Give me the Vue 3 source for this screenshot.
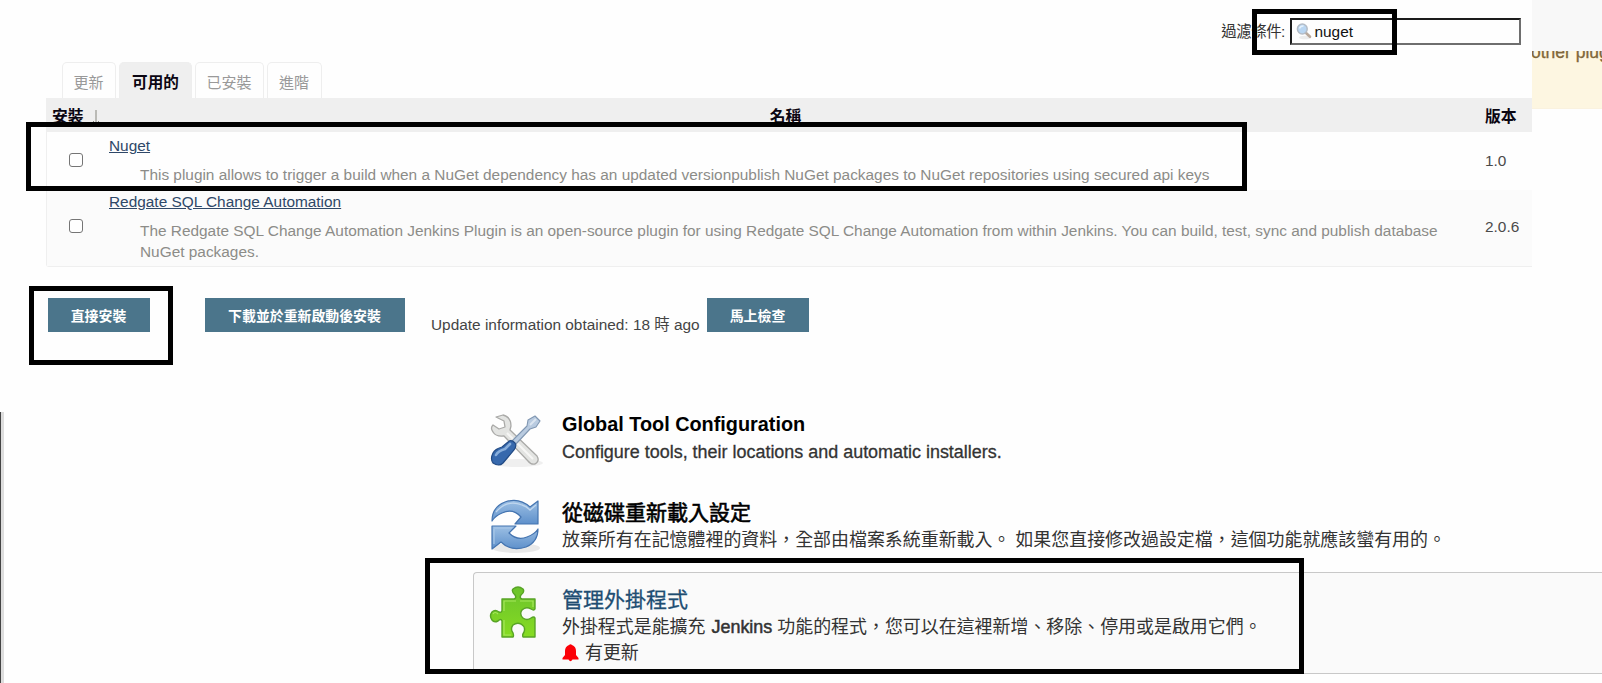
<script setup>
const tabs = [
  { label: '更新', width: 54 },
  { label: '可用的', width: 73, active: true },
  { label: '已安裝', width: 69 },
  { label: '進階', width: 55 },
]
const plugins = [
  {
    name: 'Nuget',
    lines: ['This plugin allows to trigger a build when a NuGet dependency has an updated versionpublish NuGet packages to NuGet repositories using secured api keys'],
    version: '1.0',
  },
  {
    name: 'Redgate SQL Change Automation',
    lines: [
      'The Redgate SQL Change Automation Jenkins Plugin is an open-source plugin for using Redgate SQL Change Automation from within Jenkins. You can build, test, sync and publish database',
      'NuGet packages.',
    ],
    version: '2.0.6',
  },
]
</script>

<template>
  <div class="page">
    <div class="upper">
      <main class="manager">
        <div class="filter">
          <label>過濾條件:</label>
          <div class="search">
            <svg width="17" height="17" viewBox="0 0 17 17">
              <ellipse cx="9" cy="14.5" rx="6" ry="1.8" fill="#ececec" />
              <path d="M9.5 9.5L14 13.8" stroke="#b9a99c" stroke-width="2.6" stroke-linecap="round" />
              <circle cx="6.3" cy="6" r="4.9" fill="#b9d6f2" stroke="#b4bcc6" stroke-width="1.5" />
              <path d="M3.5 5.5Q4.5 2.8 7.5 3" stroke="#e6f2fc" stroke-width="1.5" fill="none" />
            </svg>
            <span>nuget</span>
          </div>
        </div>
        <nav class="tabs">
          <div v-for="t in tabs" :key="t.label" class="tab" :class="{ active: t.active }" :style="{ width: t.width + 'px' }">{{ t.label }}</div>
        </nav>
        <div class="table">
          <div class="row head">
            <div class="c1">安裝<svg class="arrow" width="8" height="15" viewBox="0 0 8 15"><path d="M4 0V14M1 11L4 14L7 11" stroke="#85857c" fill="none" /></svg></div>
            <div class="c2">名稱</div>
            <div class="c3">版本</div>
          </div>
          <div v-for="p in plugins" :key="p.name" class="row item">
            <div class="c1"><i class="check"></i></div>
            <div class="c2">
              <a>{{ p.name }}</a>
              <div class="desc"><p v-for="l in p.lines" :key="l">{{ l }}</p></div>
            </div>
            <div class="c3">{{ p.version }}</div>
          </div>
        </div>
        <div class="actions">
          <button class="b1">直接安裝</button>
          <button class="b2">下載並於重新啟動後安裝</button>
          <span class="info">Update information obtained: 18 時 ago</span>
          <button class="b3">馬上檢查</button>
        </div>
      </main>
      <aside class="side">
        <div class="side-top"></div>
        <div class="notice"><span>other plug</span></div>
      </aside>
    </div>

    <section class="lower">
      <div class="entry tool">
        <svg class="icon" width="56" height="56" viewBox="0 0 56 56">
          <ellipse cx="29" cy="50" rx="26" ry="4" fill="#efefef" />
          <path d="M8 4L15 2Q23 4 23 13L22 17L49 43Q52 48 47 51Q43 52 40 48L16 23Q8 24 5 19Q2 15 5 12L11 16L17 14L16 8Z" fill="#e3e4e2" stroke="#aaaaa8" stroke-width="1.3" stroke-linejoin="round" />
          <path d="M19 20L45 46" stroke="#f6f6f5" stroke-width="2" />
          <path d="M24 28L39 13L40 7L47 3L52 8L48 14L42 16L27 32Z" fill="#b9cbe0" stroke="#8097b2" stroke-width="1.1" stroke-linejoin="round" />
          <path d="M42 12L48 6" stroke="#dce6f0" stroke-width="2" />
          <path d="M20 29Q23 26 27 30Q29 33 26 37L15 50Q11 54 5 50Q2 46 5 40Q7 36 14 34Z" fill="#3769ad" stroke="#214a84" stroke-width="1.2" />
          <path d="M8 42Q10 38 17 36L22 31" stroke="#88aedb" stroke-width="2.6" fill="none" stroke-linecap="round" />
        </svg>
        <div class="copy">
          <h3 class="g">Global Tool Configuration</h3>
          <p class="latin">Configure tools, their locations and automatic installers.</p>
        </div>
      </div>
      <div class="entry reload">
        <svg class="icon" width="56" height="56" viewBox="0 0 56 56">
          <defs>
            <linearGradient id="blue" x1="0" y1="0" x2="0" y2="1">
              <stop offset="0" stop-color="#9dc0e4" /><stop offset="1" stop-color="#5e90cb" />
            </linearGradient>
          </defs>
          <ellipse cx="28" cy="50" rx="24" ry="5" fill="#e9e9e9" />
          <path d="M4 23Q4 9 17 4Q31 -1 42 9L50 3V26H27L33 19Q25 10 14 15Q7 18 4 23Z" fill="url(#blue)" stroke="#4474b0" stroke-width="1.2" stroke-linejoin="round" />
          <path d="M50 31Q50 44 38 49Q23 54 13 44L4 51V28H28L21 35Q29 43 39 39Q47 36 50 31Z" fill="url(#blue)" stroke="#4474b0" stroke-width="1.2" stroke-linejoin="round" />
          <path d="M8 14Q19 1 34 7Q38 8 42 12L48 7" stroke="#bfd6ee" stroke-width="1.3" fill="none" />
          <path d="M6 30H24M6 31V46" stroke="#a9c8e8" stroke-width="1.2" fill="none" />
        </svg>
        <div class="copy">
          <h3>從磁碟重新載入設定</h3>
          <p>放棄所有在記憶體裡的資料，全部由檔案系統重新載入。 如果您直接修改過設定檔，這個功能就應該蠻有用的。</p>
        </div>
      </div>
      <div class="entry plugin">
        <svg class="icon" width="56" height="56" viewBox="0 0 56 56">
          <defs>
            <linearGradient id="green" x1="0" y1="0" x2="0" y2="1">
              <stop offset="0" stop-color="#6bc32c" /><stop offset="1" stop-color="#86dc22" />
            </linearGradient>
          </defs>
          <path d="M13 13H25Q28 12 26 9Q22 5 24 3Q29 -1 34 3Q36 6 32 9Q30 12 33 13H46V23Q45 25 42 23Q37 20 33 24Q30 28 34 32Q38 35 42 32Q45 30 46 32V51H34Q33 49 35 46Q37 41 32 38Q28 36 24 39Q21 43 24 47Q25 50 24 51H13V35Q12 32 9 35Q5 37 3 34Q0 30 3 26Q6 23 10 26Q13 27 13 24Z" fill="url(#green)" stroke="#58a426" stroke-width="1.4" stroke-linejoin="round" />
          <path d="M15 25V15H27M31 15H44V21M15 34V49H22M4 28Q6 25 9 28" stroke="#a6e65d" stroke-width="1.2" fill="none" />
        </svg>
        <div class="copy">
          <h3>管理外掛程式</h3>
          <p>外掛程式是能擴充 <b>Jenkins</b> 功能的程式，您可以在這裡新增、移除、停用或是啟用它們。</p>
          <p class="update">
            <svg width="17" height="18" viewBox="0 0 17 18">
              <path d="M7 1Q8.500 -.5 10 1Q14 2.500 14 7V11L16.500 14V15.500H10.500Q8.500 19 6.500 15.500H.5V14L3 11V7Q3 2.500 7 1Z" fill="#fb0007" />
            </svg>
            有更新
          </p>
        </div>
      </div>
    </section>

    <div class="mark m1"></div>
    <div class="mark m2"></div>
    <div class="mark m3"></div>
    <div class="mark m4"></div>
  </div>
</template>

<style>
body { margin: 0; background: #fefefe; overflow: hidden; }
</style>

<style scoped>
* { box-sizing: border-box; }
.page { position: relative; width: 1602px; height: 683px; overflow: hidden; background: #fefefe; font-family: "Liberation Sans", "Noto Sans CJK TC", sans-serif; font-size: 15.4px; color: #333; display: flex; flex-direction: column; }
p, h3 { margin: 0; white-space: nowrap; }
.upper { display: flex; height: 412px; flex: none; }
.manager { width: 1532px; flex: none; }
.filter { height: 62px; padding: 18px 11px 0 0; display: flex; justify-content: flex-end; }
.filter label { line-height: 27px; margin-right: 5px; letter-spacing: -.4px; }
.search { width: 231px; height: 27px; border: 2px solid; border-color: #1c1c1c #6e6e6e #6e6e6e #1c1c1c; display: flex; align-items: center; padding-left: 4px; gap: 1.5px; color: #111; }
.tabs { height: 36px; display: flex; gap: 3px; padding-left: 62px; }
.tab { border: 1px solid #eee; border-bottom: 0; border-radius: 5px 5px 0 0; text-align: center; line-height: 39px; color: #999; font-size: 15px; padding-right: 1px; }
.tab.active { background: #efefef; color: #0b0612; font-weight: bold; font-size: 15.6px; padding: 0; }
.table { margin-left: 46px; border: 1px solid #efefef; border-top: 0; border-right: 0; height: 169px; border-radius: 0 0 0 3px; }
.row { display: flex; }
.c1 { width: 62px; flex: none; }
.c2 { width: 1376px; flex: none; }
.c3 { color: #4a4a4a; }
.head { height: 34px; background: #efefef; font-weight: bold; line-height: 37px; font-size: 15.8px; color: #0b0612; }
.head .c1 { padding-left: 5px; display: flex; }
.head .c2 { text-align: center; padding-right: 23px; }
.head .c3 { color: #0b0612; }
.arrow { margin: 12px 0 0 8px; }
.item { height: 58px; background: #fefefe; }
.item:last-child { height: 76px; background: #fbfbfb; }
.item .c1, .item .c3 { display: flex; align-items: center; }
.item .c1 { padding: 0 0 2px 22px; }
.item .c3 { padding-bottom: 1px; }
.item:last-child .c1 { padding-bottom: 4px; }
.item:last-child .c3 { padding-bottom: 2px; }
.check { width: 14px; height: 14px; border: 1px solid #757575; border-radius: 3px; background: #fff; }
.item .c2 { padding-top: 3px; }
.item:last-child .c2 { padding-top: 1px; }
.item a { display: block; width: max-content; line-height: 21px; color: #2f4868; text-decoration: underline; }
.desc { padding: 8px 0 0 31px; line-height: 21px; color: #8c8c88; }
.actions { display: flex; padding: 31px 0 0 48px; height: 80px; }
button { border: 0; padding: 0 1px 0 0; height: 34px; background: #4b758b; color: #fff; font: bold 13.9px "Liberation Sans", "Noto Sans CJK TC", sans-serif; }
.b1 { width: 102px; margin-right: 55px; }
.b2 { width: 200px; margin-right: 26px; }
.b3 { width: 102px; }
.info { width: 276px; line-height: 21px; padding-top: 16px; white-space: nowrap; color: #444; }
.side { width: 70px; overflow: hidden; }
.side-top { height: 51px; background: #f8f8f8; }
.notice { height: 58px; background: #fdf6e1; border-bottom: 1px solid #faf2df; overflow: hidden; white-space: nowrap; font-size: 17.5px; color: #80663a; line-height: 20px; -webkit-text-stroke: .3px; }
.notice span { display: block; margin: -9px 0 0 -1px; }
.lower { height: 271px; border-left: 1px solid #444; box-shadow: inset 3px 0 #ddd; }
.entry { margin-left: 472px; display: flex; padding-left: 15px; }
.copy { margin-left: 18px; flex: none; }
.icon { flex: none; }
.entry p { font-size: 17.95px; line-height: 26px; color: #333; }
.entry h3 { font-size: 21px; line-height: 28px; color: #000; font-weight: normal; -webkit-text-stroke: .6px; }
.entry h3.g { font-size: 19.85px; font-weight: bold; -webkit-text-stroke: 0; }
.entry p.latin { -webkit-text-stroke: .3px; }
.tool { height: 86px; }
.tool .copy { margin-top: -2px; }
.tool .icon { margin-top: 1px; }
.tool p { padding-top: 1px; }
.reload { height: 74px; }
.reload .copy { margin-top: 1px; }
.plugin { height: 102px; background: #fafafa; border: 1px solid #c8c8c8; border-right: 0; border-radius: 4px 0 0 4px; padding-left: 15px; }
.plugin .icon { margin-top: 13px; }
.plugin .copy { margin: 13px 0 0 17px; }
.plugin h3 { color: #204d72; -webkit-text-stroke: .3px; }
.plugin b { font-weight: normal; -webkit-text-stroke: .5px; margin-left: 1px; }
.update { display: flex; align-items: center; gap: 6px; }
.mark { position: absolute; border: 5px solid #000; }
.m1 { left: 1252px; top: 9px; width: 145px; height: 46px; }
.m2 { left: 26px; top: 122px; width: 1221px; height: 69px; }
.m3 { left: 29px; top: 286px; width: 144px; height: 79px; }
.m4 { left: 425px; top: 558px; width: 879px; height: 116px; }
</style>
